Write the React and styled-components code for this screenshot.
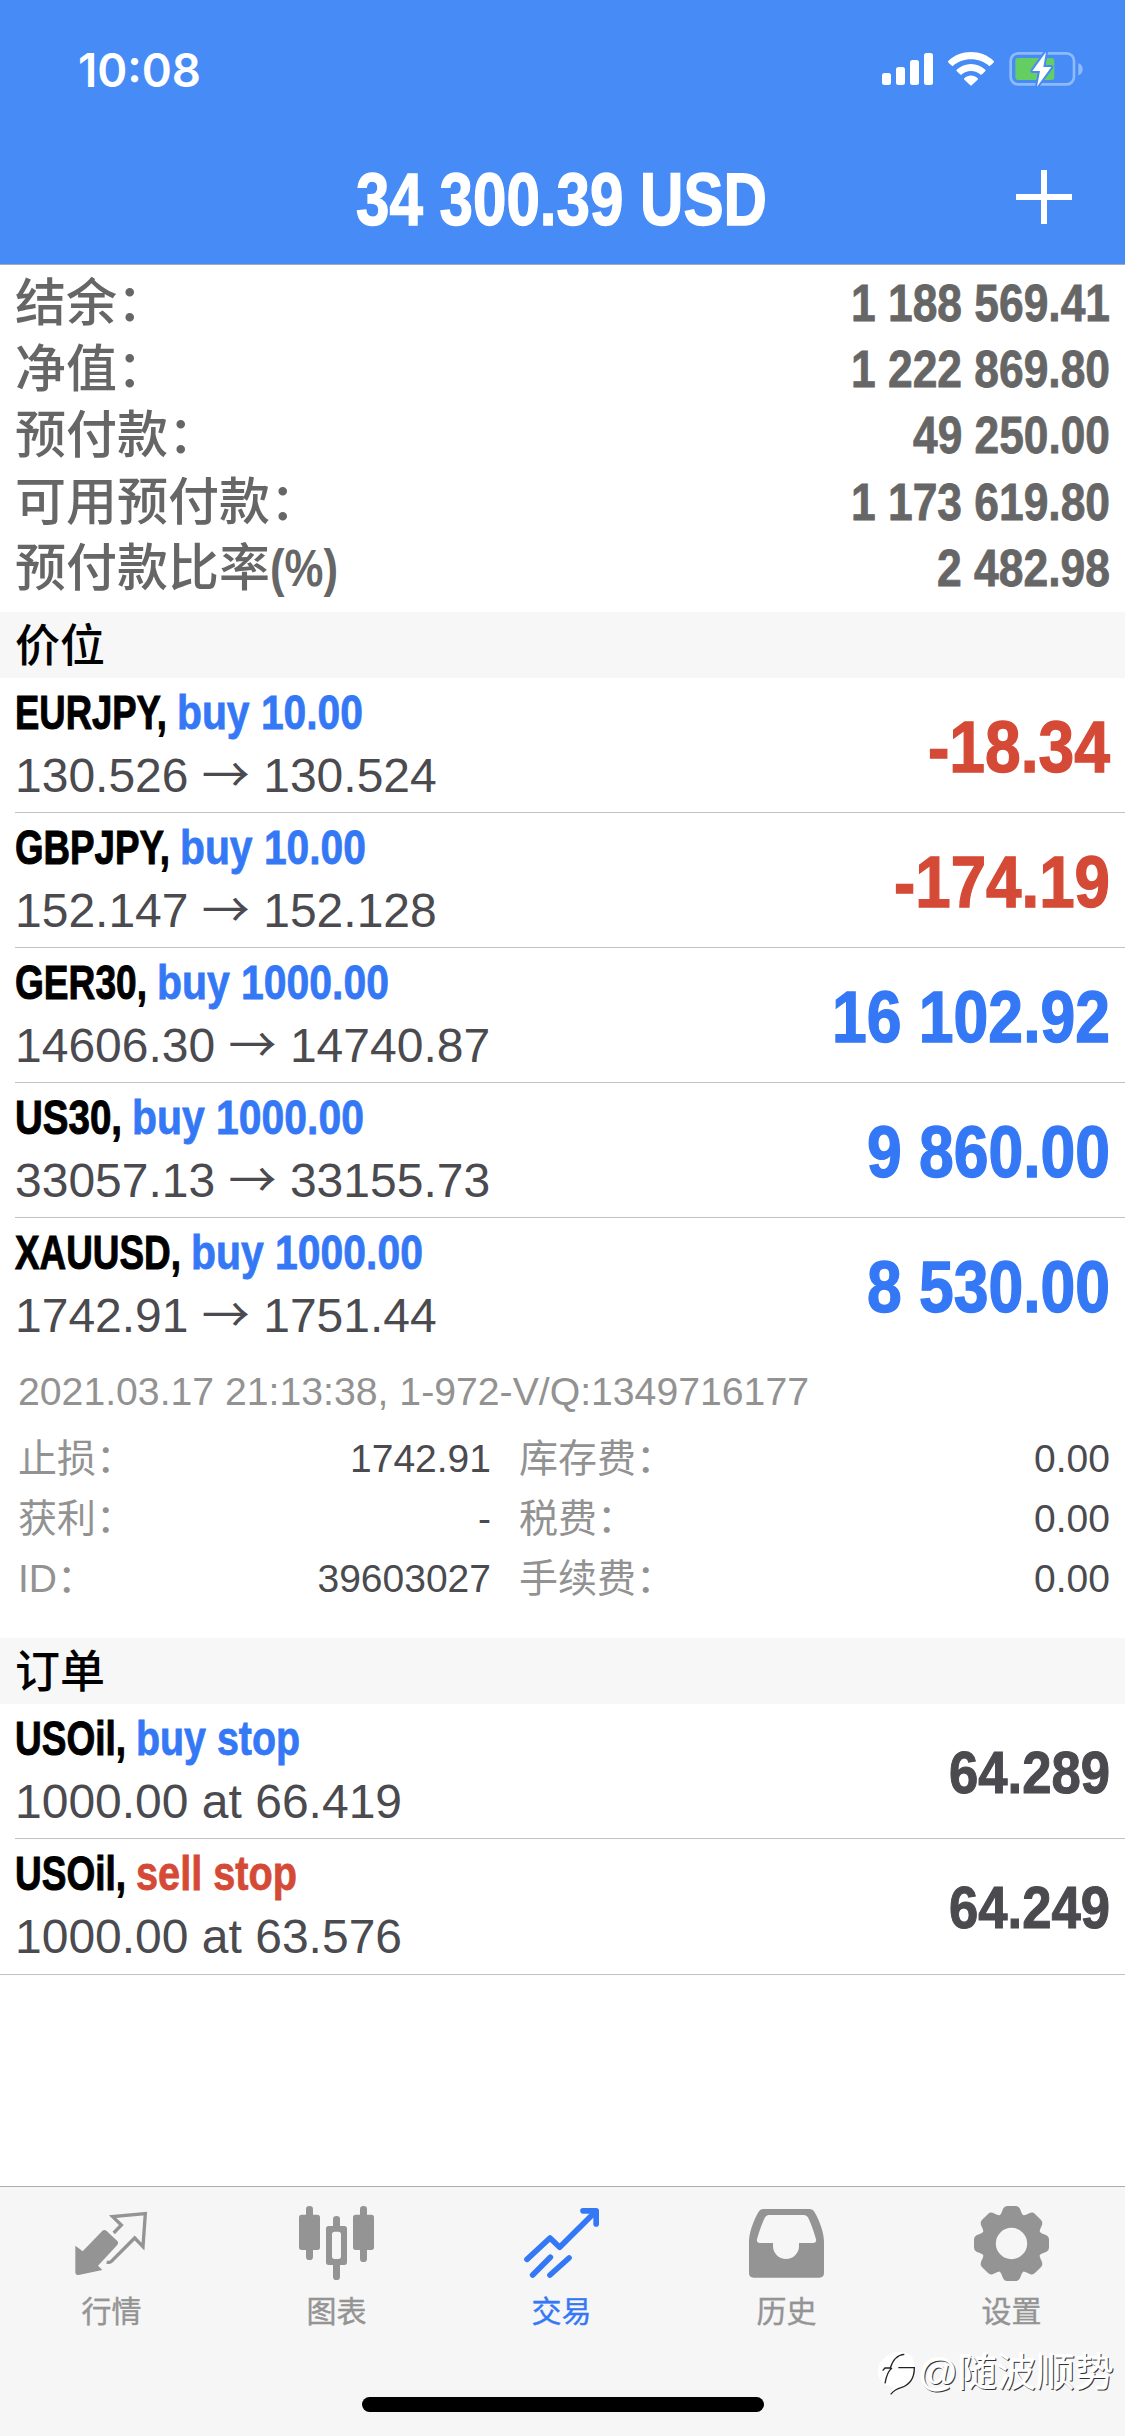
import React, { useLayoutEffect, useRef, useState } from "react";
import styled, { createGlobalStyle } from "styled-components";

const color = {
  header: "#468bf6",
  blue: "#3478f6",
  red: "#d54a36",
  label: "#666666",
  text: "#4a4a4f",
  muted: "#929292",
  line: "#c2c2c4",
  band: "#f7f7f7",
};

const GlobalStyle = createGlobalStyle`
  *, *::before, *::after { box-sizing: border-box; }
  html, body { margin: 0; padding: 0; background: #fff; }
  body {
    font-family: "Liberation Sans", "Noto Sans CJK SC", Arial, sans-serif;
    color: ${color.text};
  }
`;

/* ---------- condensed text ---------- */

const FitBox = styled.span`
  display: inline-block;
  flex: none;
  white-space: pre;
`;

const FitInner = styled.span`
  display: inline-block;
  transform-origin: 0 50%;
  -webkit-text-stroke: ${(p) => p.$stroke}px currentColor;
`;

function Fit({ width, stroke = 0, children }) {
  const ref = useRef(null);
  const [scale, setScale] = useState(1);
  useLayoutEffect(() => {
    const natural = ref.current.getBoundingClientRect().width / scale;
    if (natural) setScale(width / natural);
  }, [width, children]);
  return (
    <FitBox style={{ width }}>
      <FitInner ref={ref} $stroke={stroke} style={{ transform: `scaleX(${scale})` }}>
        {children}
      </FitInner>
    </FitBox>
  );
}

/* ---------- layout ---------- */

const Screen = styled.div`
  position: relative;
  width: 1125px;
  height: 2436px;
  display: flex;
  flex-direction: column;
  background: #fff;
  overflow: hidden;
`;

const Header = styled.header`
  height: 265px;
  flex: none;
  background: ${color.header};
  border-bottom: 1px solid #a9abb4;
  color: #fff;
`;

const StatusBar = styled.div`
  height: 138px;
  padding: 0 42px 0 78px;
  display: flex;
  justify-content: space-between;
  align-items: center;
`;

const Clock = styled.div`
  font-family: Inter, "Liberation Sans", sans-serif;
  font-size: 46px;
  font-weight: 600;
  line-height: 60px;
  padding-top: 1px;
`;

const StatusIcons = styled.div`
  display: flex;
  align-items: center;
  gap: 15px;
  svg { display: block; }
`;

const NavBar = styled.div`
  height: 120px;
  display: grid;
  grid-template-columns: 160px 1fr 160px;
  align-items: center;
`;

const NavTitle = styled.h1`
  grid-column: 2;
  margin: 0 3px 0 0;
  padding-top: 3px;
  font-size: 74px;
  line-height: 90px;
  font-weight: 700;
  text-align: center;
`;

const AddButton = styled.button`
  border: 0;
  padding: 0 2px 2px 0;
  background: none;
  color: #fff;
  display: flex;
  justify-content: center;
`;

const Summary = styled.section`
  height: 347px;
  flex: none;
  padding: 6px 15px 0 15px;
`;

const SummaryRow = styled.div`
  height: 66.2px;
  display: flex;
  justify-content: space-between;
  align-items: center;
  color: ${color.label};
  font-size: 51px;
  line-height: 66px;
`;

const SummaryLabel = styled.span`
  font-weight: 500;
  display: flex;
`;

const SummaryValue = styled.span`
  font-weight: 700;
`;

const SectionTitle = styled.h2`
  margin: 0;
  height: 66px;
  flex: none;
  padding: 2px 15px 0;
  background: ${color.band};
  color: #000;
  font-size: 45px;
  line-height: 66px;
  font-weight: 500;
`;

const Row = styled.div`
  height: ${(p) => (p.$tall ? 136 : 135)}px;
  flex: none;
  margin-left: ${(p) => (p.$full ? 0 : 15)}px;
  padding: 0 15px 0 ${(p) => (p.$full ? 15 : 0)}px;
  border-bottom: 1px solid ${(p) => (p.$open ? "transparent" : color.line)};
  display: flex;
  justify-content: space-between;
  align-items: center;
`;

const RowMain = styled.div`
  align-self: stretch;
  padding-top: 4px;
`;

const RowTitle = styled.div`
  display: flex;
  gap: 10px;
  font-size: 49px;
  line-height: 60px;
  font-weight: 700;
`;

const Symbol = styled.span`
  color: #000;
`;

const Action = styled.span`
  color: ${(p) => (p.$sell ? color.red : color.blue)};
`;

const RowPrice = styled.div`
  padding-top: 1px;
  font-size: 48px;
  line-height: 66px;
  white-space: pre;
`;

const Arrow = styled.span`
  display: inline-block;
  font-family: "Noto Sans CJK SC", sans-serif;
  font-weight: 400;
  line-height: 1;
`;

const Profit = styled.div`
  padding-top: 4px;
  font-size: 73px;
  line-height: 90px;
  font-weight: 700;
  color: ${(p) => (p.$loss ? color.red : color.blue)};
`;

const OrderPrice = styled.div`
  padding-top: 3px;
  font-size: 60px;
  line-height: 80px;
  font-weight: 700;
  color: ${color.text};
`;

const Details = styled.div`
  height: 285px;
  flex: none;
  padding: 9px 15px 0 18px;
  font-size: 39px;
  line-height: 60px;
`;

const DetailMeta = styled.div`
  color: ${color.muted};
  margin-bottom: 7px;
`;

const DetailGrid = styled.div`
  display: grid;
  grid-template-columns: 473px 1fr;
  column-gap: 28px;
`;

const DetailCell = styled.div`
  display: flex;
  justify-content: space-between;
`;

const DetailLabel = styled.span`
  color: ${color.muted};
  font-weight: 400;
`;

const TabBar = styled.nav`
  height: 250px;
  flex: none;
  margin-top: auto;
  background: #f6f6f6;
  border-top: 1px solid #adadad;
  display: flex;
  flex-direction: column;
  align-items: center;
  justify-content: space-between;
`;

const Tabs = styled.div`
  width: 1125px;
  margin-left: -2px;
  display: grid;
  grid-template-columns: repeat(5, 225px);
`;

const Tab = styled.div`
  padding-top: 19px;
  display: flex;
  flex-direction: column;
  align-items: center;
  color: ${(p) => (p.$active ? color.blue : "#949494")};
  svg { display: block; }
`;

const TabLabel = styled.span`
  margin-top: 11px;
  font-size: 30px;
  line-height: 40px;
  font-weight: 400;
  -webkit-text-stroke: 0.4px currentColor;
`;

const HomeIndicator = styled.div`
  width: 402px;
  height: 15px;
  margin: 0 0 24px 1px;
  border-radius: 8px;
  background: #000;
`;

const Watermark = styled.div`
  position: absolute;
  right: 11px;
  bottom: 38px;
  display: flex;
  align-items: center;
  gap: 3px;
  color: #fff;
  font-size: 39px;
  line-height: 50px;
  text-shadow: 1px 1px 0 #333, -1px -1px 0 #fff;
`;

/* ---------- icons ---------- */

const SignalIcon = () => (
  <svg width="51" height="34" viewBox="0 0 51 34" fill="#fff">
    <rect x="0" y="21" width="9" height="12" rx="2.5" />
    <rect x="14" y="15" width="9" height="18" rx="2.5" />
    <rect x="28" y="8" width="9" height="25" rx="2.5" />
    <rect x="42" y="1" width="9" height="32" rx="2.5" />
  </svg>
);

const WifiIcon = () => (
  <svg width="46" height="34" viewBox="264 65 138 102" fill="#fff">
    <path d="M264 93 C301 56 365 56 402 93 Q403 96 388 108 C359 80 307 80 278 108 Q263 96 264 93Z" />
    <path d="M289 119 C314 95 352 95 377 119 Q378 122 363 134 C346 118 320 118 303 134 Q288 122 289 119Z" />
    <path d="M313 144 C325 133 341 133 353 144 Q355 146 353 148 L335 165 Q333 167 331 165 L313 148 Q311 146 313 144Z" />
  </svg>
);

const BatteryIcon = () => (
  <svg width="74" height="38" viewBox="446 60 222 114">
    <rect x="451" y="70" width="190" height="93" rx="22" fill="none" stroke="#8fbaf9" strokeWidth="8" />
    <path d="M654 100 Q667 104 667 118 Q667 132 654 136Z" fill="#8fbaf9" />
    <rect x="465" y="84" width="117" height="66" rx="9" fill="#65ce63" />
    <path
      d="M557 66 L516 123 H539 L530 170 L573 111 H549Z"
      fill="#fff"
      stroke={color.header}
      strokeWidth="12"
      strokeLinejoin="round"
      paintOrder="stroke"
    />
  </svg>
);

const PlusIcon = () => (
  <svg width="56" height="56" viewBox="0 0 56 56" stroke="#fff" strokeWidth="6">
    <path d="M28 1V55M0 28H56" />
  </svg>
);

const QuotesIcon = () => (
  <svg width="75" height="75" viewBox="222 108 225 225" fill="currentColor">
    <path d="M226 227 L248 244 L306 184 Q313 177 320 183 L352 213 Q357 219 351 226 L294 287 L307 300 L236 315 Q226 316 226 307Z" />
    <path
      d="M341 189 L364 165 L338 140 L436 131 L429 230 L404 204 L334 274 Q330 278 320 277"
      fill="none"
      stroke="currentColor"
      strokeWidth="10"
    />
  </svg>
);

const ChartIcon = () => (
  <svg width="75" height="75" viewBox="897 108 225 225" fill="currentColor">
    <rect x="897" y="134" width="63" height="106" rx="8" />
    <rect x="918" y="108" width="21" height="162" rx="10" />
    <rect x="1059" y="134" width="63" height="106" rx="8" />
    <rect x="1080" y="108" width="21" height="168" rx="10" />
    <path
      fillRule="evenodd"
      d="M986 168 H1033 Q1041 168 1041 176 V277 Q1041 285 1033 285 H986 Q978 285 978 277 V176 Q978 168 986 168Z M1004 185 Q996 185 996 193 V259 Q996 267 1004 267 H1015 Q1023 267 1023 259 V193 Q1023 185 1015 185Z"
    />
    <path d="M999 170 V148 Q999 138 1009.500 138 Q1020 138 1020 148 V170Z" />
    <path d="M999 283 V320 Q999 330 1009.500 330 Q1020 330 1020 320 V283Z" />
  </svg>
);

const TradeIcon = () => (
  <svg
    width="75"
    height="75"
    viewBox="372 108 225 225"
    fill="none"
    stroke="currentColor"
    strokeWidth="17"
    strokeLinecap="round"
    strokeLinejoin="round"
  >
    <path d="M381 268 L450 204 L479 232 L586 125" />
    <path d="M549 122.500 H588.500 V162" />
    <path d="M398 315 L451 262" />
    <path d="M450 315 L507 264" />
  </svg>
);

const HistoryIcon = () => (
  <svg width="75" height="75" viewBox="1047 108 225 225" fill="currentColor">
    <path
      fillRule="evenodd"
      d="M1090 117 H1228 Q1238 117 1244 127 C1260 155 1272 190 1272 215 V309 Q1272 323 1258 323 H1061 Q1047 323 1047 309 V215 C1047 190 1059 155 1075 127 Q1081 117 1090 117Z M1107 135 Q1098 135 1093 146 C1084 165 1075 192 1071 208 Q1069 219 1080 219 H1119 V228 A39 39 0 0 0 1197 228 V219 H1239 Q1250 219 1248 208 C1244 192 1235 165 1226 146 Q1221 135 1211 135Z"
    />
  </svg>
);

const SettingsIcon = () => (
  <svg width="75" height="75" viewBox="-112.500 -112.500 225 225" fill="currentColor">
    <circle r="68.500" fill="none" stroke="currentColor" strokeWidth="43" />
    {[0, 45, 90, 135, 180, 225, 270, 315].map((a) => (
      <path
        key={a}
        transform={`rotate(${a})`}
        d="M-39 -76 Q-35 -86 -31 -90 L-25 -105 Q-21 -112.500 -13 -112.500 H13 Q21 -112.500 25 -105 L31 -90 Q35 -86 39 -76Z"
      />
    ))}
  </svg>
);

const WatermarkIcon = () => (
  <svg width="38" height="46" viewBox="110 550 114 138" fill="none">
    <path
      d="M150 562 Q190 545 215 570 Q232 605 212 640 Q185 665 150 683 L160 660 Q112 655 112 610 Q115 580 150 562Z"
      fill="#fff"
    />
    <path
      d="M127 612 L134 604 H150 Q162 565 192 563 M134 650 Q140 615 155 604 M174 603 H222 Q222 650 182 663 Q165 667 151 683"
      stroke="#222"
      strokeWidth="4"
    />
  </svg>
);

/* ---------- data ---------- */

const summary = [
  { label: "结余：", value: "1 188 569.41", width: 259 },
  { label: "净值：", value: "1 222 869.80", width: 259 },
  { label: "预付款：", value: "49 250.00", width: 197 },
  { label: "可用预付款：", value: "1 173 619.80", width: 259 },
  { label: "预付款比率", suffix: "(%)", value: "2 482.98", width: 173 },
];

const positions = [
  { symbol: "EURJPY,", sw: 152, action: "buy 10.00", aw: 186, from: "130.526", to: "130.524", profit: "-18.34", pw: 182 },
  { symbol: "GBPJPY,", sw: 155, action: "buy 10.00", aw: 186, from: "152.147", to: "152.128", profit: "-174.19", pw: 216 },
  { symbol: "GER30,", sw: 132, action: "buy 1000.00", aw: 232, from: "14606.30", to: "14740.87", profit: "16 102.92", pw: 278 },
  { symbol: "US30,", sw: 107, action: "buy 1000.00", aw: 232, from: "33057.13", to: "33155.73", profit: "9 860.00", pw: 243 },
  { symbol: "XAUUSD,", sw: 166, action: "buy 1000.00", aw: 232, from: "1742.91", to: "1751.44", profit: "8 530.00", pw: 243 },
];

const details = [
  ["止损：", "1742.91"],
  ["库存费：", "0.00"],
  ["获利：", "-"],
  ["税费：", "0.00"],
  ["ID：", "39603027"],
  ["手续费：", "0.00"],
];

const orders = [
  { symbol: "USOil,", action: "buy stop", aw: 164, text: "1000.00 at 66.419", price: "64.289" },
  { symbol: "USOil,", action: "sell stop", aw: 161, text: "1000.00 at 63.576", price: "64.249", sell: true },
];

const tabs = [
  { label: "行情", Icon: QuotesIcon },
  { label: "图表", Icon: ChartIcon },
  { label: "交易", Icon: TradeIcon, active: true },
  { label: "历史", Icon: HistoryIcon },
  { label: "设置", Icon: SettingsIcon },
];

/* ---------- app ---------- */

export default function App() {
  return (
    <>
      <GlobalStyle />
      <Screen>
        <Header>
          <StatusBar>
            <Clock><Fit width={123}>10:08</Fit></Clock>
            <StatusIcons>
              <SignalIcon />
              <WifiIcon />
              <BatteryIcon />
            </StatusIcons>
          </StatusBar>
          <NavBar>
            <NavTitle><Fit width={411} stroke={1.4}>34 300.39 USD</Fit></NavTitle>
            <AddButton aria-label="+"><PlusIcon /></AddButton>
          </NavBar>
        </Header>

        <Summary>
          {summary.map((s) => (
            <SummaryRow key={s.label}>
              <SummaryLabel>
                {s.label}
                {s.suffix && <b><Fit width={68}>{s.suffix}</Fit></b>}
              </SummaryLabel>
              <SummaryValue><Fit width={s.width} stroke={0.8}>{s.value}</Fit></SummaryValue>
            </SummaryRow>
          ))}
        </Summary>

        <SectionTitle>价位</SectionTitle>
        {positions.map((p, i) => (
          <Row key={p.symbol} $open={i === positions.length - 1}>
            <RowMain>
              <RowTitle>
                <Symbol><Fit width={p.sw} stroke={1}>{p.symbol}</Fit></Symbol>
                <Action><Fit width={p.aw} stroke={0.8}>{p.action}</Fit></Action>
              </RowTitle>
              <RowPrice>{p.from} <Arrow>→</Arrow> {p.to}</RowPrice>
            </RowMain>
            <Profit $loss={p.profit.startsWith("-")}>
              <Fit width={p.pw} stroke={1.4}>{p.profit}</Fit>
            </Profit>
          </Row>
        ))}

        <Details>
          <DetailMeta><Fit width={791}>2021.03.17 21:13:38, 1-972-V/Q:1349716177</Fit></DetailMeta>
          <DetailGrid>
            {details.map(([label, value]) => (
              <DetailCell key={label}>
                <DetailLabel>{label}</DetailLabel>
                <span>{value}</span>
              </DetailCell>
            ))}
          </DetailGrid>
        </Details>

        <SectionTitle>订单</SectionTitle>
        {orders.map((o, i) => (
          <Row key={o.text} $full={i === 1} $tall={i === 1}>
            <RowMain>
              <RowTitle>
                <Symbol><Fit width={111} stroke={1}>{o.symbol}</Fit></Symbol>
                <Action $sell={o.sell}><Fit width={o.aw} stroke={0.8}>{o.action}</Fit></Action>
              </RowTitle>
              <RowPrice>{o.text}</RowPrice>
            </RowMain>
            <OrderPrice><Fit width={161} stroke={1.1}>{o.price}</Fit></OrderPrice>
          </Row>
        ))}

        <TabBar>
          <Tabs>
            {tabs.map(({ label, Icon, active }) => (
              <Tab key={label} $active={active}>
                <Icon />
                <TabLabel>{label}</TabLabel>
              </Tab>
            ))}
          </Tabs>
          <HomeIndicator />
        </TabBar>

        <Watermark>
          <WatermarkIcon />
          <span>@随波顺势</span>
        </Watermark>
      </Screen>
    </>
  );
}
